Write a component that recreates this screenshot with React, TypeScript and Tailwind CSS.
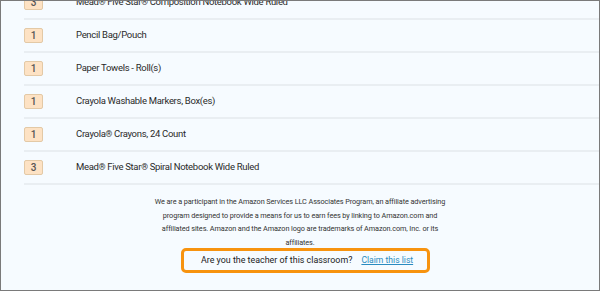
const items = [
  { qty: 3, name: ['Mead', 'R', ' Five Star', 'R', ' Composition Notebook Wide Ruled'] },
  { qty: 1, name: ['Pencil Bag/Pouch'] },
  { qty: 1, name: ['Paper Towels - Roll(s)'] },
  { qty: 1, name: ['Crayola Washable Markers, Box(es)'] },
  { qty: 1, name: ['Crayola', 'R', ' Crayons, 24 Count'] },
  { qty: 3, name: ['Mead', 'R', ' Five Star', 'R', ' Spiral Notebook Wide Ruled'] },
];

// the registered mark is drawn a little smaller than the letters around it
function ItemName({ parts }: { parts: string[] }) {
  return (
    <span className="ml-[33px] text-[9.5px] tracking-[-0.3px] text-[#2a2a2a]">
      {parts.map((p, i) => p === 'R'
        ? <span key={i} className="text-[8.6px]">®</span>
        : <span key={i}>{p}</span>)}
    </span>
  );
}

function ItemRow({ qty, name }: { qty: number; name: string[] }) {
  return (
    <div className="flex h-[33px] items-center border-b-2 border-[#e9eef2]">
      <span className="flex h-[15px] w-[19px] items-center justify-center rounded-[2px] border border-[#e3c9a6] bg-[#fde2c4] text-[10px] font-medium text-[#555]">
        {qty}
      </span>
      <ItemName parts={name} />
    </div>
  );
}

export default function App() {
  return (
    <div
      className="h-[291px] w-[600px] overflow-hidden border border-[#7a7a7a] bg-[#f6fbff]"
      style={{ fontFamily: 'Roboto, "Noto Sans", sans-serif' }}>
      <div className="-mt-[14px] pl-[23px]">
        {items.map((it, i) => <ItemRow key={i} {...it} />)}
      </div>

      <p className="mx-auto mt-[10px] w-[320px] whitespace-nowrap text-center text-[7.3px] tracking-[-0.1px] leading-[13.5px] text-[#333]">
        We are a participant in the Amazon Services LLC Associates Program, an affiliate advertising<br />
        program designed to provide a means for us to earn fees by linking to Amazon.com and<br />
        affiliated sites. Amazon and the Amazon logo are trademarks of Amazon.com, Inc. or its<br />
        affiliates.
      </p>

      <div className="flex justify-center pl-[11px]">
        <div className="-mt-[1px] flex h-[25px] w-[249px] items-center whitespace-nowrap rounded-[5px] border-[3px] border-[#f7930f] pl-[17px] text-[8.9px] text-[#222]">
          <span>Are you the teacher of this classroom?</span>
          <a className="ml-[9px] text-[8.6px] text-[#2a8bc0] underline">Claim this list</a>
        </div>
      </div>
    </div>
  );
}
